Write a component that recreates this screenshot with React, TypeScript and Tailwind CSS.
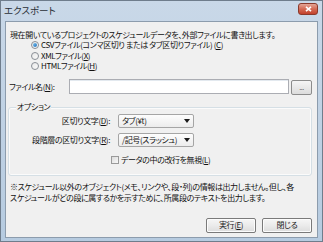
import React from "react";

const font = "font-['Noto_Sans_CJK_JP','Noto_Sans',sans-serif] [font-feature-settings:'palt']";

function Radio({ checked }: { checked?: boolean }) {
  return (
    <span className="relative inline-flex h-[8px] w-[8px] shrink-0 items-center justify-center rounded-full border border-[#8a8f96] bg-gradient-to-br from-[#e8e8e8] to-[#fbfbfb]">
      {checked && <span className="h-[4px] w-[4px] rounded-full bg-gradient-to-br from-[#7dc3f0] to-[#1c6fb8]" />}
    </span>
  );
}

function Key({ k }: { k: string }) {
  return (
    <>
      (<span className="underline underline-offset-1">{k}</span>)
    </>
  );
}

function Dropdown({ text }: { text: string }) {
  return (
    <div className="flex h-[14px] w-[76px] items-center justify-between rounded-[2px] border border-[#a5a5a5] bg-gradient-to-b from-[#fdfdfd] to-[#ececec] pl-[3px] pr-[3px]">
      <span className="leading-none">{text}</span>
      <svg width="6" height="4" viewBox="0 0 6 4">
        <path d="M0 0H6L3 4Z" fill="#1a1a1a" />
      </svg>
    </div>
  );
}

function Btn({ children }: { children: React.ReactNode }) {
  return (
    <button className="flex h-[15px] w-[50px] items-center justify-center rounded-[2px] border border-[#7a7a7a] bg-gradient-to-b from-[#f6f6f6] via-[#ebebeb] to-[#dcdcdc] leading-none text-[#1a1a1a] shadow-[inset_0_0_0_1px_#fcfcfc]">
      {children}
    </button>
  );
}

export default function App() {
  return (
    <div className={`w-[323px] h-[242px] overflow-hidden whitespace-nowrap flex flex-col border border-[#6f7d8c] bg-gradient-to-b from-[#c9d8e8] to-[#b6cbe0] text-[8px] tracking-[-0.4px] text-[#111] ${font}`}>
      {/* title bar */}
      <div className="flex h-[20px] shrink-0 items-start justify-between pl-[3px] pr-[4px]">
        <span className="mt-[3px] text-[9.5px] leading-[12px] tracking-normal text-[#2a2f36]">エクスポート</span>
        <div className="mt-[2px] flex h-[12px] w-[20px] items-center justify-center rounded-[3px] border border-[#8a3a2c] bg-gradient-to-b from-[#e3a597] via-[#d46a55] to-[#c2402b]">
          <svg width="7" height="6" viewBox="0 0 7 6">
            <path d="M1 0.8L6 5.2M6 0.8L1 5.2" stroke="#fff" strokeWidth="1.6" />
          </svg>
        </div>
      </div>

      {/* client area */}
      <div className="mx-[4px] mb-[3px] flex flex-1 flex-col border border-[#8c9cad] bg-[#f0f0f0] pl-[3px] pr-[5px]">
        <div className="mt-[7px] h-[11px] pl-[1px] leading-[11px]">
          現在開いているプロジェクトのスケジュールデータを、外部ファイルに書き出します。
        </div>

        <div className="flex flex-col pl-[22px]">
          <label className="flex h-[10.5px] items-center gap-[2px]">
            <Radio checked />
            <span className="leading-none">CSVファイル(コンマ区切り または タブ区切りファイル) <Key k="C" /></span>
          </label>
          <label className="flex h-[10.5px] items-center gap-[2px]">
            <Radio />
            <span className="leading-none">XMLファイル<Key k="X" /></span>
          </label>
          <label className="flex h-[10.5px] items-center gap-[2px]">
            <Radio />
            <span className="leading-none">HTMLファイル<Key k="H" /></span>
          </label>
        </div>

        <div className="mt-[7px] flex h-[16px] items-start">
          <span className="mt-[3px] w-[60px] leading-[10px]">ファイル名<Key k="N" />:</span>
          <div className="h-[15px] w-[222px] border border-[#abadb3] bg-white shadow-[inset_0_1px_0_#e3e9ef]" />
          <button className="ml-[2px] mt-[1px] flex h-[15px] w-[21px] items-end justify-center rounded-[2px] border border-[#8c8c8c] bg-gradient-to-b from-[#f5f5f5] to-[#dcdcdc] pb-[3px] text-[7px] leading-none text-[#555]">
            ...
          </button>
        </div>

        {/* group box */}
        <div className="relative ml-[-1px] mt-[12px] flex flex-col rounded-[3px] border border-[#d5dfe5] pb-[9px] pt-[6px] shadow-[inset_0_0_0_1px_#fbfbfb]">
          <span className="absolute left-[7px] top-[-7px] bg-[#f0f0f0] px-[1px] leading-[11px]">オプション</span>
          <div className="flex items-center">
            <span className="w-[102px] pr-[1px] text-right leading-none">区切り文字<Key k="D" />:</span>
            <span className="ml-[7px]"><Dropdown text="タブ(¥t)" /></span>
          </div>
          <div className="mt-[5px] flex items-center">
            <span className="w-[102px] pr-[1px] text-right leading-none">段階層の区切り文字<Key k="R" />:</span>
            <span className="ml-[7px]"><Dropdown text="/記号(スラッシュ)" /></span>
          </div>
          <label className="ml-[102px] mt-[7px] flex h-[12px] items-center gap-[2px]">
            <span className="h-[8px] w-[8px] shrink-0 border border-[#9a9a9a] bg-gradient-to-br from-[#dcdcdc] to-[#f8f8f8]" />
            <span className="leading-none">データの中の改行を無視<Key k="L" /></span>
          </label>
        </div>

        <div className="mt-[5px] pl-[1px] leading-[11px]">
          ※スケジュール以外のオブジェクト(メモ、リンクや、段・列)の情報は出力しません。但し、各
          <br />
          スケジュールがどの段に属するかを示すために、所属段のテキストを出力します。
        </div>

        <div className="mt-[15px] flex justify-end gap-[6px] pr-[0px]">
          <Btn>実行<Key k="E" /></Btn>
          <Btn>閉じる</Btn>
        </div>
      </div>
    </div>
  );
}
